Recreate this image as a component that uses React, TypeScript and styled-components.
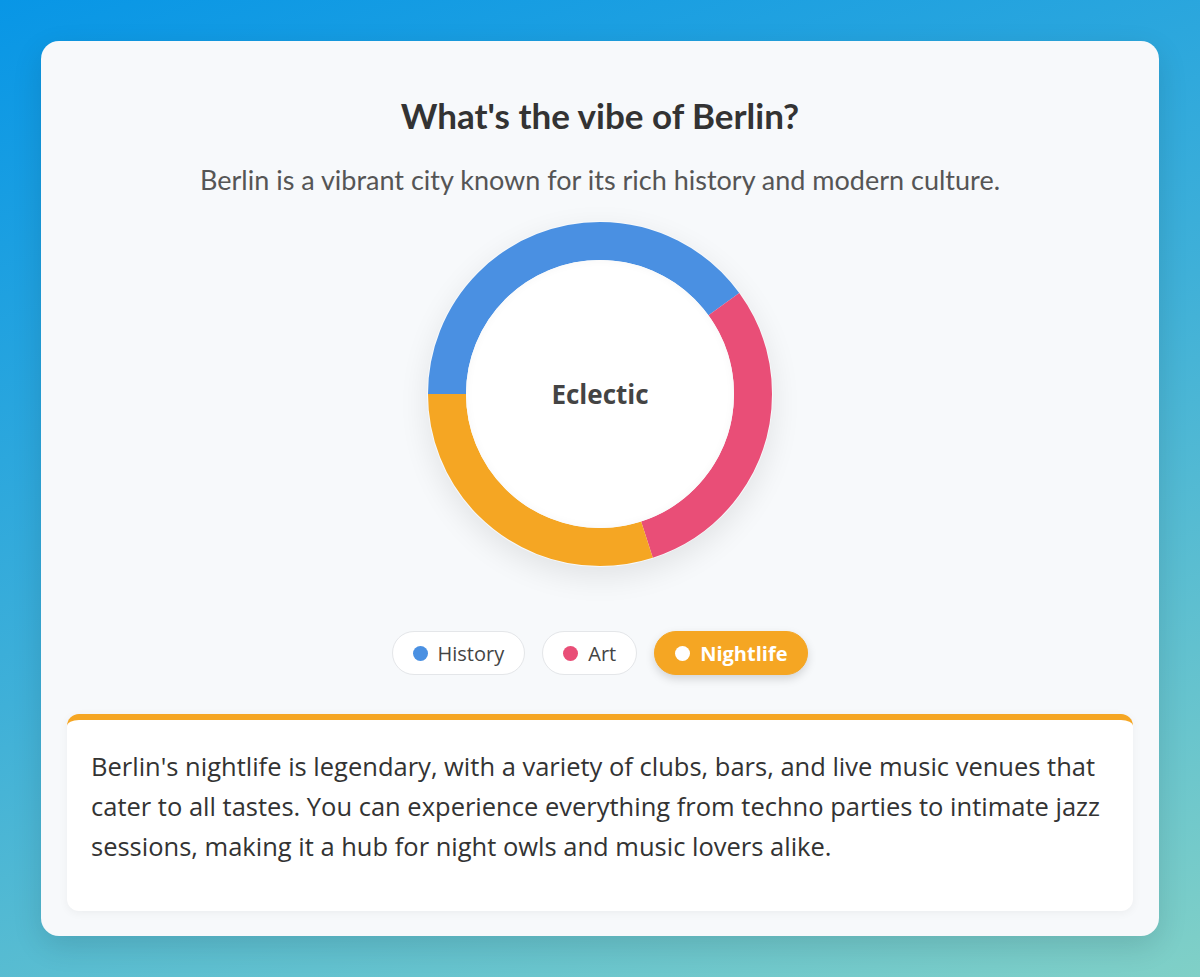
import React, { useState } from "react";
import styled, { createGlobalStyle } from "styled-components";

const GlobalStyle = createGlobalStyle`
  html, body {
    margin: 0;
    padding: 0;
  }
  body {
    min-height: 977px;
    background: linear-gradient(160deg, #0896e6 0%, #3fb0d8 50%, #80d0c7 100%);
    font-family: "Open Sans", "Noto Sans", sans-serif;
  }
`;

const Page = styled.div`
  padding: 41px;
  box-sizing: border-box;
  height: 977px;
`;

const Card = styled.div`
  background: #f7f9fb;
  border-radius: 18px;
  height: 895px;
  box-sizing: border-box;
  padding: 44px 26px 26px;
  display: flex;
  flex-direction: column;
  align-items: center;
  box-shadow: 0 10px 30px rgba(0, 0, 0, 0.12);
`;

const Title = styled.h1`
  margin: 0;
  font-family: Lato, sans-serif;
  font-weight: 700;
  font-size: 35px;
  line-height: 60px;
  color: #333;
`;

const Subtitle = styled.p`
  margin: 15px 0 0;
  font-family: Lato, sans-serif;
  font-size: 27px;
  line-height: 40px;
  color: #555;
`;

const ChartWrap = styled.div`
  margin-top: 21px;
  width: 346px;
  height: 346px;
  border-radius: 50%;
  box-shadow: 0 10px 30px rgba(0, 0, 0, 0.09);
  display: grid;
  place-items: center;
  & > * {
    grid-area: 1 / 1;
  }
`;

const Center = styled.div`
  width: 268px;
  height: 268px;
  border-radius: 50%;
  background: #fff;
  display: flex;
  align-items: center;
  justify-content: center;
  font-family: "Open Sans", sans-serif;
  font-weight: 700;
  font-size: 26px;
  color: #444;
  box-shadow: inset 0 0 10px rgba(0, 0, 0, 0.04);
`;

const Legend = styled.div`
  margin-top: 64px;
  display: flex;
  gap: 17px;
`;

const Pill = styled.button<{ $active: boolean; $color: string }>`
  display: flex;
  align-items: center;
  gap: 10px;
  height: 44px;
  padding: 0 20px;
  border-radius: 22px;
  border: 1px solid ${(p) => (p.$active ? p.$color : "#e4e6e9")};
  background: ${(p) => (p.$active ? p.$color : "#fff")};
  color: ${(p) => (p.$active ? "#fff" : "#444")};
  font-family: "Open Sans", sans-serif;
  font-weight: ${(p) => (p.$active ? 700 : 400)};
  font-size: 20px;
  cursor: pointer;
  box-shadow: ${(p) => (p.$active ? "0 4px 10px rgba(0,0,0,0.15)" : "none")};
`;

const Dot = styled.span<{ $color: string }>`
  width: 15px;
  height: 15px;
  border-radius: 50%;
  background: ${(p) => p.$color};
`;

const Description = styled.div<{ $color: string }>`
  margin-top: 39px;
  align-self: stretch;
  background: #fff;
  border-radius: 12px;
  border-top: 6px solid ${(p) => p.$color};
  padding: 26px 20px 45px 24px;
  box-shadow: 0 2px 10px rgba(0, 0, 0, 0.05);
  font-family: "Open Sans", sans-serif;
  font-size: 25.5px;
  line-height: 40px;
  color: #333;
`;

const categories = [
  {
    name: "History",
    color: "#4a90e2",
    value: 40,
    text: "Berlin's history is everywhere, from the remains of the Wall to its grand museums and memorials.",
  },
  {
    name: "Art",
    color: "#e94e77",
    value: 30,
    text: "Berlin's art scene thrives in galleries, studios and street murals across the city.",
  },
  {
    name: "Nightlife",
    color: "#f5a623",
    value: 30,
    text: "Berlin's nightlife is legendary, with a variety of clubs, bars, and live music venues that cater to all tastes. You can experience everything from techno parties to intimate jazz sessions, making it a hub for night owls and music lovers alike.",
  },
];

const R = 153;
const C = 2 * Math.PI * R;

const Donut = () => {
  let offset = 0;
  return (
    <svg width="346" height="346" viewBox="0 0 346 346">
      <g transform="rotate(180 173 173)">
        {categories.map((c) => {
          const len = (c.value / 100) * C;
          const el = (
            <circle
              key={c.name}
              cx="173"
              cy="173"
              r={R}
              fill="none"
              stroke={c.color}
              strokeWidth="38"
              strokeDasharray={`${len} ${C - len}`}
              strokeDashoffset={-offset}
            />
          );
          offset += len;
          return el;
        })}
      </g>
    </svg>
  );
};

export default function App() {
  const [active, setActive] = useState(2);
  const current = categories[active];
  return (
    <Page>
      <GlobalStyle />
      <Card>
        <Title>What's the vibe of Berlin?</Title>
        <Subtitle>Berlin is a vibrant city known for its rich history and modern culture.</Subtitle>
        <ChartWrap>
          <Donut />
          <Center>Eclectic</Center>
        </ChartWrap>
        <Legend>
          {categories.map((c, i) => (
            <Pill key={c.name} $active={i === active} $color={c.color} onClick={() => setActive(i)}>
              <Dot $color={i === active ? "#fff" : c.color} />
              {c.name}
            </Pill>
          ))}
        </Legend>
        <Description $color={current.color}>{current.text}</Description>
      </Card>
    </Page>
  );
}
